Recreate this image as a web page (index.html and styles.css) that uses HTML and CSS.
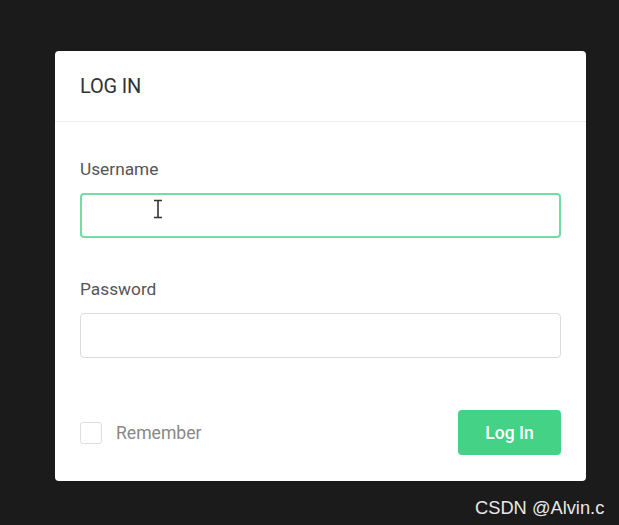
FILE: index.html
```html
<!DOCTYPE html>
<html>
<head>
<meta charset="utf-8">
<link rel="stylesheet" href="styles.css">
</head>
<body>
<div class="stage">
  <div class="card">
    <div class="card-header">LOG IN</div>
    <div class="card-body">
      <div class="field">
        <label class="label">Username</label>
        <div class="input input-focus"></div>
      </div>
      <div class="field">
        <label class="label">Password</label>
        <div class="input"></div>
      </div>
      <div class="footer">
        <div class="remember">
          <span class="checkbox"></span>
          <span class="remember-text">Remember</span>
        </div>
        <button class="btn">Log In</button>
      </div>
    </div>
  </div>
  <svg class="cursor" width="12" height="20" viewBox="0 0 12 20">
    <path d="M2 1.5h8M2 18.5h8M6 1.5v17" stroke="#333" stroke-width="1.6" fill="none"/>
  </svg>
  <div class="watermark">CSDN @Alvin.c</div>
</div>
</body>
</html>
```
FILE: styles.css
```css
html, body {
  margin: 0;
  padding: 0;
  background: #1b1b1b;
}
.stage {
  position: relative;
  width: 619px;
  height: 525px;
  padding: 51px 0 0 55px;
  box-sizing: border-box;
  font-family: Roboto, "Liberation Sans", sans-serif;
}
.card {
  width: 531px;
  height: 430px;
  background: #fff;
  border-radius: 4px;
  box-sizing: border-box;
  display: flex;
  flex-direction: column;
}
.card-header {
  height: 70px;
  border-bottom: 1px solid #eeeeee;
  display: flex;
  align-items: center;
  padding: 0 25px;
  font-size: 20px;
  color: #333;
  letter-spacing: -0.2px;
}
.card-body {
  padding: 36px 25px 0 25px;
  display: flex;
  flex-direction: column;
}
.field {
  display: flex;
  flex-direction: column;
}
.field + .field {
  margin-top: 40px;
}
.label {
  display: block;
  font-size: 17.3px;
  line-height: 22px;
  color: #555;
  margin-bottom: 13px;
}
.input {
  height: 45px;
  border: 1px solid #dcdcdc;
  border-radius: 4px;
  box-sizing: border-box;
}
.input-focus {
  border: 2px solid #74dda3;
}
.footer {
  margin-top: 52px;
  display: flex;
  align-items: center;
  justify-content: space-between;
}
.remember {
  display: flex;
  align-items: center;
}
.checkbox {
  width: 22px;
  height: 22px;
  border: 1px solid #dedede;
  border-radius: 3px;
  box-sizing: border-box;
  margin-right: 14px;
}
.remember-text {
  font-size: 17.6px;
  color: #888;
}
.btn {
  width: 103px;
  height: 45px;
  border: none;
  border-radius: 4px;
  background: #43d286;
  color: #fff;
  font-family: Roboto, "Liberation Sans", sans-serif;
  font-size: 17.5px;
  font-weight: 500;
  padding: 0;
}
.cursor {
  position: absolute;
  left: 152px;
  top: 199px;
}
.watermark {
  position: absolute;
  left: 475px;
  top: 497px;
  font-family: "Liberation Sans", Arial, sans-serif;
  font-size: 18.3px;
  color: #e8e8e8;
}
```
